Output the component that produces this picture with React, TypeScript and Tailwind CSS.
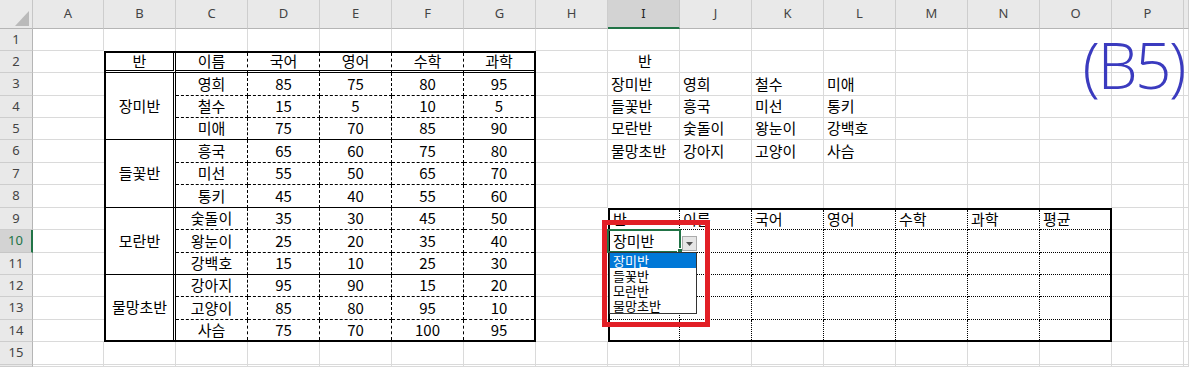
import { Fragment } from 'react';

const COLS = ['A', 'B', 'C', 'D', 'E', 'F', 'G', 'H', 'I', 'J', 'K', 'L', 'M', 'N', 'O', 'P', 'Q'];
const ROWS = Array.from({ length: 16 }, (_, i) => i + 1);

const groups = [
  { name: '장미반', rows: [['영희', 85, 75, 80, 95], ['철수', 15, 5, 10, 5], ['미애', 75, 70, 85, 90]] },
  { name: '들꽃반', rows: [['흥국', 65, 60, 75, 80], ['미선', 55, 50, 65, 70], ['통키', 45, 40, 55, 60]] },
  { name: '모란반', rows: [['숯돌이', 35, 30, 45, 50], ['왕눈이', 25, 20, 35, 40], ['강백호', 15, 10, 25, 30]] },
  { name: '물망초반', rows: [['강아지', 95, 90, 15, 20], ['고양이', 85, 80, 95, 10], ['사슴', 75, 70, 100, 95]] },
];

// class list at I3:L6
const classList: string[][] = [
  ['장미반', '영희', '철수', '미애'],
  ['들꽃반', '흥국', '미선', '통키'],
  ['모란반', '숯돌이', '왕눈이', '강백호'],
  ['물망초반', '강아지', '고양이', '사슴'],
];

const inLeft = (r: number, c: number) => r >= 2 && r <= 14 && c >= 1 && c <= 6;
const inRight = (r: number, c: number) => r >= 9 && r <= 14 && c >= 8 && c <= 14;

function gridLine(r: number, c: number) {
  const noR = (c === 0 && r >= 2 && r <= 14) || (c === 7 && r >= 9 && r <= 14);
  const noB = (r === 1 && c >= 1 && c <= 6) || (r === 8 && c >= 8 && c <= 14);
  if (noR && noB) return '';
  if (noR) return 'border-b border-[#dadada]';
  if (noB) return 'border-r border-[#dadada]';
  return 'border-r border-b border-[#dadada]';
}

function cellText(r: number, c: number) {
  if (r === 2 && c === 8) return { text: '반', center: true };
  if (r >= 3 && r <= 6 && c >= 8 && c <= 11) return { text: classList[r - 3][c - 8], center: false };
  return null;
}

function LeftTable() {
  const heads = ['반', '이름', '국어', '영어', '수학', '과학'];
  return (
    <div className="col-start-3 col-span-6 row-start-3 row-span-13 grid grid-cols-subgrid grid-rows-subgrid border-2 border-black">
      {heads.map((h, i) => (
        <div
          key={h}
          className={`flex items-center justify-center border-black ${
            i === 0
              ? 'border-r-[3px] border-b-[3px] border-double'
              : i < 5
                ? 'border-dashed border-r border-b-[3px] [border-bottom-style:double]!'
                : 'border-b-[3px] border-double'
          }`}
        >
          {h}
        </div>
      ))}
      {groups.map((g, gi) => (
        <Fragment key={g.name}>
          {g.rows.map((row, k) => (
            <Fragment key={k}>
              {k === 0 && (
                <div
                  className={`row-span-3 flex items-center justify-center border-black border-double border-r-[3px] ${
                    gi < 3 ? 'border-b [border-bottom-style:solid]!' : ''
                  }`}
                >
                  {g.name}
                </div>
              )}
              {row.map((v, j) => {
                let cls = '';
                if (j < 4) {
                  if (k < 2) cls = 'border-dashed border-r border-b';
                  else if (gi < 3) cls = 'border-dashed border-r border-b [border-bottom-style:solid]!';
                  else cls = 'border-dashed border-r';
                } else {
                  if (k < 2) cls = 'border-dashed border-b';
                  else if (gi < 3) cls = 'border-b';
                }
                return (
                  <div key={j} className={`flex items-center justify-center border-black ${cls}`}>
                    {v}
                  </div>
                );
              })}
            </Fragment>
          ))}
        </Fragment>
      ))}
    </div>
  );
}

function RightTable() {
  const heads = ['반', '이름', '국어', '영어', '수학', '과학', '평균'];
  return (
    <div className="col-start-10 col-span-7 row-start-10 row-span-6 grid grid-cols-subgrid grid-rows-subgrid border-2 border-black">
      {Array.from({ length: 6 }).map((_, r) =>
        heads.map((h, c) => (
          <div
            key={`${r}-${c}`}
            className={`flex items-center pl-[3px] border-dotted border-black ${c < 6 ? 'border-r' : ''} ${
              r < 5 ? 'border-b' : ''
            }`}
          >
            {r === 0 ? h : r === 1 && c === 0 ? '장미반' : ''}
          </div>
        )),
      )}
    </div>
  );
}

export default function App() {
  return (
    <div className="relative grid h-[367px] w-[1189px] grid-cols-[33px_71px_repeat(15,72px)_1fr] grid-rows-[29px_22px_22px_23px_22px_22px_23px_22px_23px_22px_23px_22px_22px_23px_22px_23px_1fr] overflow-hidden bg-white font-['Noto_Sans_CJK_KR','Noto_Sans',sans-serif] text-[15px] text-black">
      {/* corner */}
      <div className="flex items-end justify-end border-r border-b border-r-[#c6c6c6] border-b-[#b5b5b5] bg-[#e9e9e9] pr-[3px] pb-[2px]">
        <svg width="14" height="15" viewBox="0 0 14 15">
          <polygon points="14,0 14,15 0,15" fill="#bababa" />
        </svg>
      </div>
      {COLS.map((c) => (
        <div
          key={c}
          className={`flex items-center justify-center font-['Noto_Sans',sans-serif] text-[13px] ${
            c === 'I'
              ? 'border-r border-b-2 border-r-[#c6c6c6] border-b-[#217346] bg-[#d3d3d3] text-[#262626]'
              : 'border-r border-b border-r-[#cdcdcd] border-b-[#b5b5b5] bg-[#e9e9e9] text-[#444]'
          }`}
        >
          {c === 'Q' ? '' : c}
        </div>
      ))}

      {ROWS.map((r) => (
        <Fragment key={r}>
          <div
            className={`flex items-center justify-center font-['Noto_Sans',sans-serif] text-[13px] ${
              r === 10
                ? 'border-r-2 border-b border-r-[#217346] border-b-[#c6c6c6] bg-[#d3d3d3] text-[#217346]'
                : 'border-r border-b border-r-[#b5b5b5] border-b-[#cdcdcd] bg-[#e9e9e9] text-[#444]'
            }`}
          >
            {r <= 15 ? r : ''}
          </div>
          {COLS.map((_, c) => {
            if (inLeft(r, c) || inRight(r, c)) return null;
            const t = cellText(r, c);
            return (
              <div
                key={c}
                className={`flex items-center pl-[3px] ${t?.center ? 'justify-center' : ''} ${gridLine(r, c)}`}
              >
                {t?.text}
              </div>
            );
          })}
        </Fragment>
      ))}

      <LeftTable />
      <RightTable />

      {/* selected cell I10 */}
      <div className="absolute left-[607px] top-[229px] h-[24px] w-[74px] border-2 border-[#217346]" />
      <div className="absolute left-[677px] top-[248px] size-[6px] border border-white bg-[#217346]" />

      {/* validation dropdown button */}
      <div className="absolute left-[682px] top-[236px] flex h-[15px] w-[15px] items-center justify-center border border-[#ababab] bg-[#e6e6e6]">
        <svg width="7" height="4" viewBox="0 0 7 4">
          <polygon points="0,0 7,0 3.5,4" fill="#505050" />
        </svg>
      </div>

      {/* dropdown list */}
      <div className="absolute left-[609px] top-[252px] w-[88px] border border-[#333] bg-white text-[13px] leading-none">
        {['장미반', '들꽃반', '모란반', '물망초반'].map((s, i) => (
          <div
            key={s}
            className={`flex h-[15px] items-center pl-[3px] ${i === 0 ? 'bg-[#0078d7] text-white' : ''}`}
          >
            {s}
          </div>
        ))}
      </div>

      {/* red annotation box */}
      <div className="absolute left-[602px] top-[220px] h-[107px] w-[108px] border-[5px] border-[#e21f26]" />

      <div className="absolute right-[5px] top-[33px] font-['Open_Sans',sans-serif] text-[64px] leading-none font-light tracking-[-2.5px] text-[#3b3bbf]">
        (B5)
      </div>
    </div>
  );
}
